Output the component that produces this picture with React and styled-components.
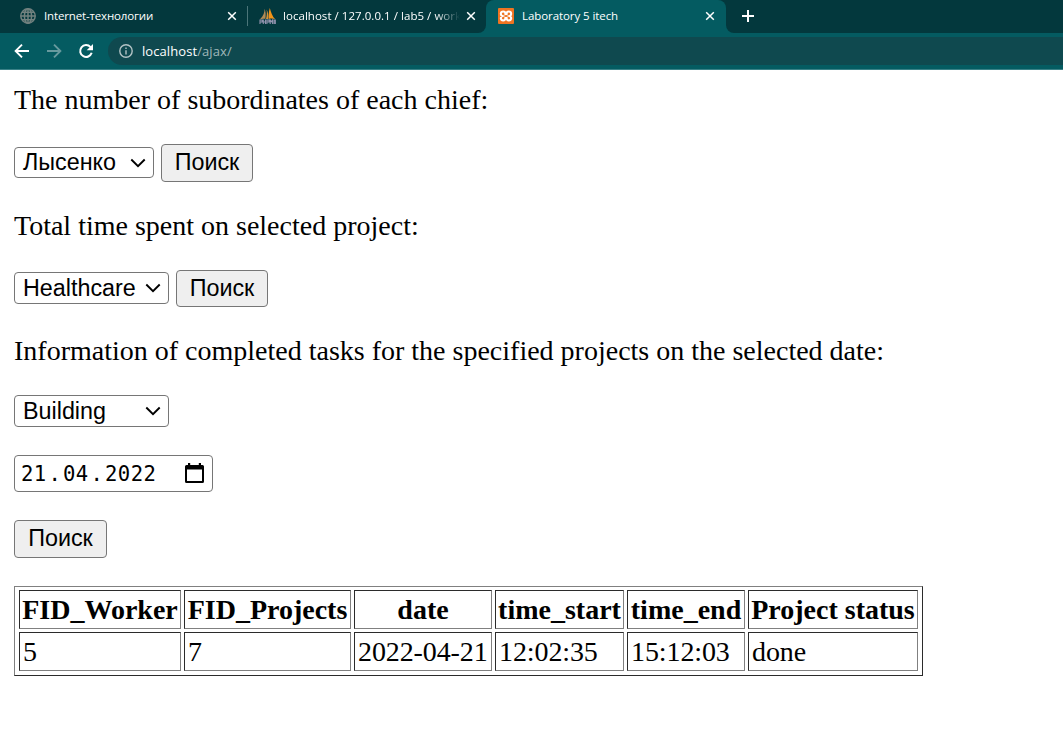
import React from "react";
import styled, { createGlobalStyle } from "styled-components";

const Global = createGlobalStyle`
  * { box-sizing: border-box; }
  html, body { margin: 0; background: #fff; overflow: hidden; }
`;

const Window = styled.div`
  width: 100%;
  height: 751px;
  display: flex;
  flex-direction: column;
  overflow: hidden;
`;

const TabStrip = styled.div`
  display: flex;
  height: 33px;
  background: #03383d;
  color: #fff;
  font: 11.5px/16px "Open Sans", "Noto Sans", sans-serif;
`;

const StripGroup = styled.div`
  display: flex;
  width: 486px;
  background: #03383d;
  border-bottom-right-radius: 8px;
`;

const StripRest = styled.div`
  flex: 1;
  background: #03383d;
  border-bottom-left-radius: 8px;
  padding: 10px 0 0 16px;
`;

const Holder = styled.div`
  display: flex;
  background: #045b61;
  ${(p) => p.$grow && "flex: 1;"}
`;

const Tab = styled.div`
  display: flex;
  align-items: center;
  width: ${(p) => p.$w}px;
  height: 32px;
  padding: 0 ${(p) => p.$pr || 10}px 0 ${(p) => p.$pl}px;
`;

const ActiveWrap = styled.div`
  background: #03383d;
`;

const ActiveTab = styled(Tab)`
  height: 33px;
  padding-bottom: 1px;
  background: #045b61;
  border-radius: 8px 8px 0 0;
`;

const Title = styled.span`
  flex: 1;
  margin-left: ${(p) => p.$ml || 8}px;
  margin-right: ${(p) => p.$mr || 0}px;
  white-space: nowrap;
  overflow: hidden;
  letter-spacing: ${(p) => p.$ls || 0}px;
  ${(p) => p.$fade && "mask-image: linear-gradient(to right, #000 86%, transparent 100%);"}
`;

const Divider = styled.span`
  width: 1px;
  height: 20px;
  margin-top: 6px;
  background: #4b7579;
`;

const Icon = styled.svg`
  display: block;
  flex: none;
`;

const Toolbar = styled.div`
  display: flex;
  align-items: center;
  height: 37px;
  padding: 0 0 1px 14px;
  background: #045b61;
  border-bottom: 1px solid #3a8187;
`;

const NavIcons = styled.div`
  display: flex;
  gap: 16px;
  width: 94px;
`;

const Address = styled.div`
  flex: 1;
  display: flex;
  align-items: center;
  height: 28px;
  padding-left: 11px;
  background: #0f494f;
  border-radius: 14px 0 0 14px;
  color: #a0b8ba;
  font: 13px/18px "Open Sans", "Noto Sans", sans-serif;
  letter-spacing: 0.08px;
`;

const Url = styled.span`
  margin-left: 9px;
  b { font-weight: 400; color: #fff; }
`;

const Page = styled.main`
  flex: 1;
  padding: 14px 14px 0;
  color: #000;
  font: 28px/32px "Liberation Serif", "Times New Roman", serif;
`;

const Text = styled.p`
  margin: 0;
  white-space: nowrap;
`;

const Row = styled.div`
  display: flex;
  align-items: center;
  gap: 7px;
  height: ${(p) => p.$h}px;
  margin: ${(p) => p.$mt}px 0 ${(p) => p.$mb}px;
`;

const Control = styled.div`
  display: flex;
  align-items: center;
  height: ${(p) => p.$h}px;
  width: ${(p) => p.$w}px;
  border: 1px solid #767676;
  border-radius: 4px;
  background: #fff;
  font: 23.33px/27px "Liberation Sans", Arial, sans-serif;
`;

const SelectBox = styled(Control)`
  justify-content: space-between;
  margin-bottom: ${(p) => p.$lift || 0}px;
  padding: 0 7px 0 8px;
`;

const Button = styled.button`
  width: ${(p) => p.$w || 92}px;
  height: ${(p) => p.$h || 38}px;
  padding: 0 0 ${(p) => p.$pb ?? 2}px;
  border: 1px solid #767676;
  border-radius: 4px;
  background: #efefef;
  color: #000;
  font: 23.33px/27px "Liberation Sans", Arial, sans-serif;
`;

const DateBox = styled(Control)`
  justify-content: space-between;
  padding: 0 8px 0 6px;
  font: 20.6px/27px "DejaVu Sans Mono", monospace;
  svg { margin-bottom: 2px; }
`;

const DateParts = styled.span`
  display: flex;
  gap: 1.75px;
  padding-top: 2px;
  letter-spacing: 0.43px;
`;

const Table = styled.table`
  display: grid;
  grid-template-columns: 162px 167px 138px 129px 118px 170px;
  gap: 3px;
  width: 909px;
  padding: 3px 4px 4px;
  border: 1px solid;
  border-color: #808080 #2b2b2b #2b2b2b #808080;
  thead, tbody, tr { display: contents; }
`;

const cell = `
  height: 39px;
  padding: 3px 0 0 3px;
  border: 1px solid;
  border-color: #2b2b2b #808080 #808080 #2b2b2b;
  white-space: nowrap;
`;
const Th = styled.th`
  ${cell}
  padding: 3px 0 0;
  text-align: center;
`;
const Td = styled.td`
  ${cell}
  letter-spacing: -0.1px;
`;

const Close = () => (
  <Icon width="10" height="10" viewBox="0 0 10 10" stroke="#fff" strokeWidth="1.5">
    <path d="M1.2 1.2 8.8 8.8M8.8 1.2 1.2 8.8" />
  </Icon>
);

const Globe = () => (
  <Icon width="16" height="16" viewBox="0 0 16 16" fill="none" stroke="#71817f" strokeWidth="1.5">
    <circle cx="8" cy="8" r="7.2" />
    <ellipse cx="8" cy="8" rx="3.6" ry="7.2" />
    <path d="M8 .8v14.400M.8 8h14.400M2 4.300h12M2 11.700h12" />
  </Icon>
);

const Sails = () => (
  <Icon width="17" height="16" viewBox="0 0 17 16">
    <path d="M5.500.8C5.800 4 4.500 8 .8 11.500 3 10.600 4.800 10.500 6.300 11 7 7.500 6.800 3.500 5.500.8Z" fill="#b08a55" />
    <path d="M7.600 1.500C8.200 4.500 7.800 8 7 11h2.300C9.800 7.500 9 4 7.600 1.500Z" fill="#d59238" />
    <path d="M10.800 0C9.600 4 9.600 7.500 9.800 11c2.300-.8 4.200-.6 6.400.2C13.400 8.600 11.800 4 10.800 0Z" fill="#f39318" />
    <path d="M1 16v-4h2.200v2H1m3.300-2.500V16m0-2h2.200m0-2.500V16m1.400 0v-4h2.200v2H7.900m3.300 2v-4l1.200 1.800 1.200-1.800v4m1.500 0v-4h1.200v4" fill="none" stroke="#9293ae" strokeWidth="1.100" />
  </Icon>
);

const Xampp = () => (
  <Icon width="16" height="16" viewBox="0 0 16 16">
    <rect width="16" height="16" rx="1" fill="#ef7422" />
    <path d="M5.200 3.600c-3 0-3 3.700-.8 4.400-2.200.7-2.200 4.400.8 4.400 1.800 0 2.200-1.500 2.200-2.400h1.200c0 .9.400 2.400 2.200 2.400 3 0 3-3.700.8-4.400 2.200-.7 2.200-4.400-.8-4.400-1.800 0-2.200 1.500-2.200 2.400H7.400c0-.9-.4-2.400-2.200-2.400Z" fill="none" stroke="#fff" strokeWidth="2" />
  </Icon>
);

const Arrow = ({ back }) => (
  <Icon width="16" height="16" viewBox="0 0 16 16" fill="none" stroke={back ? "#fff" : "#679a9e"} strokeWidth="1.9">
    {back ? <path d="M15 8H2M8 1.600 1.600 8 8 14.400" /> : <path d="M1 8h13M8 1.600 14.400 8 8 14.400" />}
  </Icon>
);

const Reload = () => (
  <Icon width="16" height="16" viewBox="0 0 16 16">
    <path d="M12.500 4.100A5.900 5.900 0 1 0 13.700 9.800" fill="none" stroke="#fff" strokeWidth="2" />
    <path d="M15 1v6.300H8.700Z" fill="#fff" />
  </Icon>
);

const Info = () => (
  <Icon width="14" height="14" viewBox="0 0 14 14" fill="none" stroke="#b3c3c5" strokeWidth="1.4">
    <circle cx="7" cy="7" r="6.2" />
    <path d="M7 6.200v4.200M7 3.400v1.600" />
  </Icon>
);

const Chevron = () => (
  <Icon width="16" height="10" viewBox="0 0 16 10" fill="none" stroke="#000" strokeWidth="1.9">
    <path d="M1.300 1.500 8 8.200 14.700 1.500" />
  </Icon>
);

const Calendar = () => (
  <Icon width="19" height="20" viewBox="0 0 19 20">
    <path d="M3 0h2.200v2h8.600V0H16v2h1.500A1.500 1.500 0 0 1 19 3.500v15a1.500 1.500 0 0 1-1.500 1.500h-16A1.500 1.500 0 0 1 0 18.500v-15A1.500 1.500 0 0 1 1.500 2H3ZM2 6.500V18h15V6.500Z" fill="#000" fillRule="evenodd" />
  </Icon>
);

const Select = ({ children, ...rest }) => (
  <SelectBox {...rest}>
    <span>{children}</span>
    <Chevron />
  </SelectBox>
);

const columns = ["FID_Worker", "FID_Projects", "date", "time_start", "time_end", "Project status"];
const rows = [["5", "7", "2022-04-21", "12:02:35", "15:12:03", "done"]];

export default function App() {
  return (
    <Window>
      <Global />
      <TabStrip>
        <Holder>
          <StripGroup>
            <Tab $w={247} $pl={20}>
              <Globe />
              <Title $ls={-0.15}>Internet-технологии</Title>
              <Close />
            </Tab>
            <Divider />
            <Tab $w={238} $pl={11}>
              <Sails />
              <Title $ml={7} $mr={6} $ls={0.04} $fade>localhost / 127.0.0.1 / lab5 / works</Title>
              <Close />
            </Tab>
          </StripGroup>
        </Holder>
        <ActiveWrap>
          <ActiveTab $w={240} $pl={12} $pr={11}>
            <Xampp />
            <Title $ls={-0.08}>Laboratory 5 itech</Title>
            <Close />
          </ActiveTab>
        </ActiveWrap>
        <Holder $grow>
          <StripRest>
            <Icon width="12" height="12" viewBox="0 0 12 12" stroke="#fff" strokeWidth="2">
              <path d="M6 0v12M0 6h12" />
            </Icon>
          </StripRest>
        </Holder>
      </TabStrip>
      <Toolbar>
        <NavIcons>
          <Arrow back />
          <Arrow />
          <Reload />
        </NavIcons>
        <Address>
          <Info />
          <Url><b>localhost</b>/ajax/</Url>
        </Address>
      </Toolbar>
      <Page>
        <Text>The number of subordinates of each chief:</Text>
        <Row $h={38} $mt={28} $mb={28}>
          <Select $w={140} $h={31} $lift={1}>Лысенко</Select>
          <Button>Поиск</Button>
        </Row>
        <Text>Total time spent on selected project:</Text>
        <Row $h={37} $mt={28} $mb={28}>
          <Select $w={155} $h={32} $lift={1}>Healthcare</Select>
          <Button $h={37} $pb={0}>Поиск</Button>
        </Row>
        <Text>Information of completed tasks for the specified projects on the selected date:</Text>
        <Row $h={32} $mt={28} $mb={28}>
          <Select $w={155} $h={32}>Building</Select>
        </Row>
        <Row $h={37} $mt={0} $mb={28}>
          <DateBox $w={199} $h={37}>
            <DateParts>
              <span>21</span><span>.</span><span>04</span><span>.</span><span>2022</span>
            </DateParts>
            <Calendar />
          </DateBox>
        </Row>
        <Row $h={38} $mt={0} $mb={28}>
          <Button $w={93}>Поиск</Button>
        </Row>
        <Table>
          <thead>
            <tr>{columns.map((c) => <Th key={c}>{c}</Th>)}</tr>
          </thead>
          <tbody>
            {rows.map((r, i) => (
              <tr key={i}>{r.map((v, j) => <Td key={j}>{v}</Td>)}</tr>
            ))}
          </tbody>
        </Table>
      </Page>
    </Window>
  );
}
